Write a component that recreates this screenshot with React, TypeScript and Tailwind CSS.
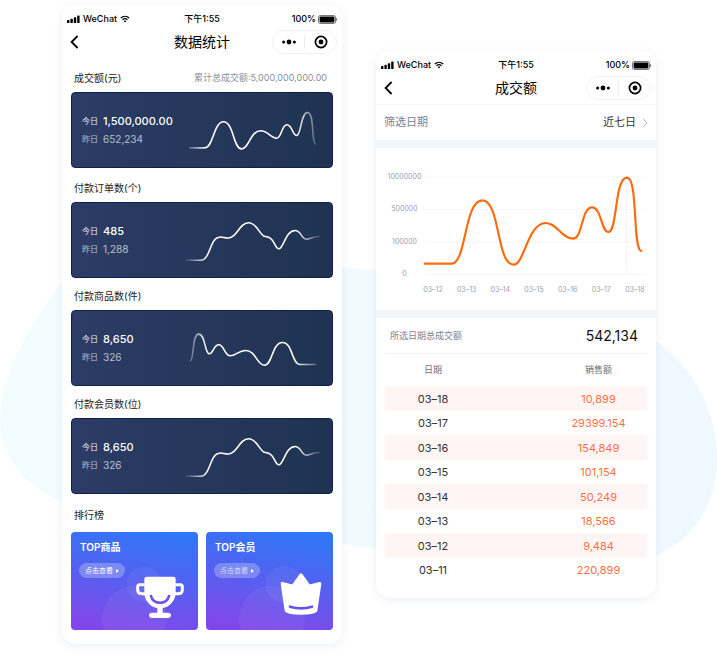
import type { ReactNode } from "react";

const fontStack = "font-['Inter','Noto_Sans_CJK_SC',sans-serif]";

function StatusBar() {
  return (
    <div className="grid h-5 grid-cols-3 items-center px-[5px] text-[9px] leading-5 font-medium text-black">
      <div className="flex items-center gap-[3px]">
        <svg viewBox="0 0 13 9" className="h-[9px] w-[13px]" fill="currentColor" aria-hidden="true">
          <rect x="0" y="5" width="2.4" height="3" rx="0.6" />
          <rect x="3.4" y="3.8" width="2.4" height="4.2" rx="0.6" />
          <rect x="6.8" y="2.2" width="2.4" height="5.8" rx="0.6" />
          <rect x="10.2" y="0.4" width="2.4" height="7.6" rx="0.6" />
        </svg>
        <span>WeChat</span>
        <svg viewBox="0 0 10 8" className="h-2 w-[10px]" fill="none" stroke="currentColor" aria-hidden="true">
          <path d="M0.8 3C3.2 0.8 6.8 0.8 9.2 3" strokeWidth="1.3" />
          <path d="M2.5 4.8C4 3.5 6 3.5 7.5 4.8" strokeWidth="1.2" />
          <path d="M3.7 6L5 7.4L6.3 6C5.5 5.4 4.5 5.4 3.7 6Z" fill="currentColor" stroke="none" />
        </svg>
      </div>
      <div className="text-center">下午1:55</div>
      <div className="flex items-center justify-end gap-[2px]">
        <span>100%</span>
        <svg viewBox="0 0 20 9" className="-mr-px h-[9px] w-5" aria-hidden="true">
          <rect x="0.5" y="0.5" width="17" height="8" rx="1.8" fill="none" stroke="#555" strokeWidth="0.8" />
          <rect x="1.6" y="1.6" width="14.8" height="5.8" rx="0.8" fill="#000" />
          <path d="M18.4 3V6C19.4 5.6 19.4 3.4 18.4 3Z" fill="#222" />
        </svg>
      </div>
    </div>
  );
}

function NavBar({ title }: { title: string }) {
  return (
    <header className="grid h-[26px] grid-cols-[65px_1fr_65px] items-center px-[5px]">
      <button type="button" aria-label="返回" className="flex h-6 w-6 items-center pl-[3px]">
        <svg viewBox="0 0 9 14" className="h-[14px] w-[9px]" fill="none" stroke="#000" strokeWidth="1.8" aria-hidden="true">
          <path d="M7.6 1L1.6 7L7.6 13" />
        </svg>
      </button>
      <h1 className="text-center text-[14px] leading-6 text-black">{title}</h1>
      <div className="flex h-6 w-[65px] items-center rounded-full border border-[#f1f1f3] bg-white">
        <button type="button" aria-label="更多" className="flex flex-1 justify-center border-r border-[#ececee] py-px">
          <svg viewBox="0 0 16 12" className="h-3 w-4" aria-hidden="true">
            <circle cx="2.6" cy="6" r="1.5" />
            <circle cx="8" cy="6" r="2.4" />
            <circle cx="13.4" cy="6" r="1.5" />
          </svg>
        </button>
        <button type="button" aria-label="关闭" className="flex flex-1 justify-center">
          <svg viewBox="0 0 14 14" className="h-[14px] w-[14px]" aria-hidden="true">
            <circle cx="7" cy="7" r="5.6" fill="none" stroke="#000" strokeWidth="1.7" />
            <circle cx="7" cy="7" r="2.4" />
          </svg>
        </button>
      </div>
    </header>
  );
}

function Phone({ title, className, children }: { title: string; className: string; children: ReactNode }) {
  return (
    <section
      className={`min-w-0 flex-1 rounded-[14px] bg-white pt-1 shadow-[0_2px_10px_rgba(60,80,140,0.09)] ${className}`}
    >
      <StatusBar />
      <NavBar title={title} />
      {children}
    </section>
  );
}

type Metric = {
  id: string;
  label: string;
  today: string;
  yesterday: string;
  viewBox: string;
  path: string;
};

const rise =
  "M392 240H435C464 240 462 174 490 171C502 169 508 176 522 173C545 168 552 128 578 128C603 128 611 163 625 168C634 171 635 169 643 174C656 182 658 206 669 206C682 206 690 151 717 151C736 151 736 177 751 177C765 177 770 168 790 169";

const metrics: Metric[] = [
  {
    id: "amount",
    label: "成交额(元)",
    today: "1,500,000.00",
    yesterday: "652,234",
    viewBox: "385 320 410 140",
    path: "M402 442H448C472 442 474 364 503 364C534 364 532 445 557 445C580 445 582 391 615 391C636 391 644 413 662 413C677 413 677 373 693 373C708 373 711 405 722 405C736 405 734 336 755 336C776 336 766 426 778 430",
  },
  {
    id: "orders",
    label: "付款订单数(个)",
    today: "485",
    yesterday: "1,288",
    viewBox: "385 111 410 140",
    path: rise,
  },
  {
    id: "goods",
    label: "付款商品数(件)",
    today: "8,650",
    yesterday: "326",
    viewBox: "385 -15 410 140",
    path: "M404 92C416 86 408 12 429 12C450 12 446 71 461 71C472 71 474 44 489 44C505 44 507 77 523 77C541 77 547 61 570 61C600 61 603 105 626 105C650 105 648 37 680 37C710 37 708 103 732 103H778",
  },
  {
    id: "members",
    label: "付款会员数(位)",
    today: "8,650",
    yesterday: "326",
    viewBox: "385 111 410 140",
    path: rise,
  },
];

function MetricCard({ metric }: { metric: Metric }) {
  return (
    <div className="flex h-[76px] items-center justify-between rounded-[4px] border border-[#10224c] bg-linear-to-r from-[#2c3c66] to-[#1f3351] pr-[11px] pl-[10px]">
      <dl className="text-white">
        <div className="flex h-[18px] items-center">
          <dt className="w-[21px] text-[8px] text-white/90">今日</dt>
          <dd className="text-[11px] font-medium">{metric.today}</dd>
        </div>
        <div className="flex h-[18px] items-center text-white/65">
          <dt className="w-[21px] text-[8px]">昨日</dt>
          <dd className="text-[10px]">{metric.yesterday}</dd>
        </div>
      </dl>
      <svg viewBox={metric.viewBox} className="h-[47px] w-[137px]" fill="none" aria-hidden="true">
        <defs>
          <linearGradient id={`fade-${metric.id}`} gradientUnits="userSpaceOnUse" x1="392" y1="0" x2="790" y2="0">
            <stop offset="0" stopColor="#fff" stopOpacity="0.1" />
            <stop offset="0.16" stopColor="#fff" />
            <stop offset="0.82" stopColor="#fff" />
            <stop offset="1" stopColor="#fff" stopOpacity="0.15" />
          </linearGradient>
        </defs>
        <path d={metric.path} stroke={`url(#fade-${metric.id})`} strokeWidth="4.6" strokeLinecap="round" />
      </svg>
    </div>
  );
}

function Trophy() {
  return (
    <svg viewBox="45 111 381 294" className="absolute inset-0 h-full w-full" aria-hidden="true">
      <circle cx="265" cy="268" r="52" fill="#fff" fillOpacity="0.05" />
      <circle cx="235" cy="370" r="97" fill="#fff" fillOpacity="0.05" />
      <path d="M268 269H251Q245 269 245 275V284Q245 296 258 296H272M356 269H373Q379 269 379 275V284Q379 296 366 296H352" fill="none" stroke="#fff" strokeWidth="9" />
      <path d="M272 245H352Q359 245 359 252V292C359 318 340 337 320 339V353H338Q345 354 345 361T338 369H286Q279 368 279 361T286 353H304V339C284 337 265 318 265 292V252Q265 245 272 245Z" fill="#fff" />
      <path d="M285 303C291 330 333 330 339 303" fill="none" stroke="#6a51ea" strokeWidth="8" strokeLinecap="round" />
    </svg>
  );
}

function Crown() {
  return (
    <svg viewBox="450 111 381 294" className="absolute inset-0 h-full w-full" aria-hidden="true">
      <circle cx="683" cy="267" r="55" fill="#fff" fillOpacity="0.05" />
      <circle cx="648" cy="370" r="98" fill="#fff" fillOpacity="0.05" />
      <path d="M679 266L711 274L735 240L759 274L791 266L779 347C770 357 700 357 691 347Z" fill="#fff" stroke="#fff" strokeWidth="10" strokeLinejoin="round" />
      <path d="M702 335C722 341 748 341 768 335" fill="none" stroke="#6a51ea" strokeWidth="8" strokeLinecap="round" />
    </svg>
  );
}

function RankCard({ title, faded, children }: { title: string; faded?: boolean; children: ReactNode }) {
  return (
    <article className="relative h-[98px] overflow-hidden rounded-[4px] bg-[linear-gradient(190deg,#2f77f7_5%,#5461f0_48%,#8247ea_92%)] px-2 pt-[7px]">
      {children}
      <h3 className="relative pl-px text-[10px] leading-4 font-semibold text-white">{title}</h3>
      <a
        href="#rank"
        className={`relative mt-1 inline-flex h-[15px] items-center gap-[3px] rounded-full bg-white/25 px-[6px] text-[7px] leading-[15px] ${faded ? "text-white/70" : "text-white"}`}
      >
        点击查看
        <svg viewBox="0 0 3 4" className="h-1 w-[3px]" fill="#fff" aria-hidden="true">
          <path d="M0 0L3 2L0 4Z" />
        </svg>
      </a>
    </article>
  );
}

function StatsPhone() {
  return (
    <Phone title="数据统计" className="pb-[14px]">
      <div className="mt-[5px] px-[9px]">
        {metrics.map((metric, index) => (
          <div key={metric.id} className={index === 0 ? "mb-[2px]" : ""}>
            <div className="flex h-8 items-center justify-between pt-1 pr-[6px] pl-[3px]">
              <h2 className="text-[10px] text-[#222]">{metric.label}</h2>
              {index === 0 && <p className="text-[9px] text-[#8b90a0]">累计总成交额:5,000,000,000.00</p>}
            </div>
            <MetricCard metric={metric} />
          </div>
        ))}
        <h2 className="flex h-[38px] items-center pt-1 pl-[3px] text-[10px] text-[#222]">排行榜</h2>
        <div id="rank" className="grid grid-cols-2 gap-2">
          <RankCard title="TOP商品">
            <Trophy />
          </RankCard>
          <RankCard title="TOP会员" faded>
            <Crown />
          </RankCard>
        </div>
      </div>
    </Phone>
  );
}

const axisValues = ["10000000", "500000", "100000", "0"];
const axisDates = ["03–12", "03–13", "03–14", "03–15", "03–16", "03–17", "03–18"];

function TrendChart() {
  return (
    <div className="pt-6 pb-[15px] text-[7px] leading-[10px] text-[#9a9fad]">
      <div className="flex pr-2 pl-[10px]">
        <div className="flex w-[37px] flex-col justify-between text-center">
          {axisValues.map((value) => (
            <span key={value}>{value}</span>
          ))}
        </div>
        <svg viewBox="160 80 675 321" className="min-w-0 flex-1" fill="none" aria-hidden="true">
          <path d="M165 95H828M165 192H828M165 290H828M165 387H828" stroke="#f6f6f8" strokeWidth="3" />
          <path d="M770 100V387" stroke="#dcdfe6" strokeWidth="2" strokeDasharray="5 4" />
          <path
            d="M165 355H247C290 352 284 165 338 165C392 165 380 358 432 358C464 358 474 233 528 233C562 233 576 280 610 280C640 280 634 186 667 186C696 186 694 260 716 260C744 260 734 97 772 97C806 97 788 314 815 317"
            stroke="#ff6a0a"
            strokeWidth="6.4"
            strokeLinecap="round"
          />
        </svg>
      </div>
      <div className="mt-[6px] mr-[9px] ml-[45px] flex justify-between">
        {axisDates.map((date) => (
          <span key={date} className="w-6 text-center whitespace-nowrap">
            {date}
          </span>
        ))}
      </div>
    </div>
  );
}

const sales = [
  ["03–18", "10,899"],
  ["03–17", "29399.154"],
  ["03–16", "154,849"],
  ["03–15", "101,154"],
  ["03–14", "50,249"],
  ["03–13", "18,566"],
  ["03–12", "9,484"],
  ["03–11", "220,899"],
];

function SalesPhone() {
  return (
    <Phone title="成交额" className="mt-[46px] pb-4">
      <div className="mt-[3px] flex h-9 items-center justify-between border-t border-[#f7f7f9] px-2 text-[11px]">
        <span className="text-[#7b8192]">筛选日期</span>
        <button type="button" className="flex items-center gap-[6px] text-[#333]">
          近七日
          <svg viewBox="0 0 6 10" className="h-[10px] w-[6px]" fill="none" stroke="#b4b8c2" aria-hidden="true">
            <path d="M1 1L5 5L1 9" />
          </svg>
        </button>
      </div>
      <div className="h-2 bg-[#f5f6fa]" />
      <TrendChart />
      <div className="h-2 bg-[#f5f6fa]" />
      <div className="mx-[9px]">
        <div className="flex h-9 items-center justify-between border-b border-[#f4f4f6] pr-[9px] pl-[5px]">
          <span className="text-[9px] text-[#7b8192]">所选日期总成交额</span>
          <strong className="text-[14px] font-normal text-[#111]">542,134</strong>
        </div>
        <table className="w-full table-fixed border-collapse text-center text-[11px]">
          <thead>
            <tr className="h-8 text-[9px] text-[#6b7182]">
              <th className="p-0 pr-[35px] font-normal">日期</th>
              <th className="p-0 pl-[34px] font-normal">销售额</th>
            </tr>
          </thead>
          <tbody className="leading-4">
            {sales.map(([date, amount], index) => (
              <tr key={date} className={index % 2 === 0 ? "h-[25px] bg-[#fff5f4]" : "h-6"}>
                <td className="p-0 pr-[35px] text-[#333]">{date}</td>
                <td className="p-0 pl-[34px] text-[#ff6f47]">{amount}</td>
              </tr>
            ))}
          </tbody>
        </table>
      </div>
    </Phone>
  );
}

export default function App() {
  return (
    <main className={`relative isolate min-h-screen bg-white ${fontStack}`}>
      <svg viewBox="0 0 717 656" className="absolute top-0 left-0 -z-10 w-full" aria-hidden="true">
        <defs>
          <linearGradient id="backdrop" x1="0" y1="0" x2="1" y2="0">
            <stop offset="0" stopColor="#f3fdff" />
            <stop offset="0.5" stopColor="#f1fbff" />
            <stop offset="1" stopColor="#eff7ff" />
          </linearGradient>
        </defs>
        <path
          d="M0 420C0 372 32 322 62 282C120 200 220 200 290 245C318 262 344 270 376 270C480 262 590 290 656 341C698 372 717 414 717 460C717 502 694 540 656 555C560 600 450 565 376 549C270 530 150 540 62 502C20 484 0 452 0 420Z"
          fill="url(#backdrop)"
        />
      </svg>
      <div className="flex items-start gap-[34px] pt-[5px] pr-[61px] pb-3 pl-[62px]">
        <StatsPhone />
        <SalesPhone />
      </div>
    </main>
  );
}
